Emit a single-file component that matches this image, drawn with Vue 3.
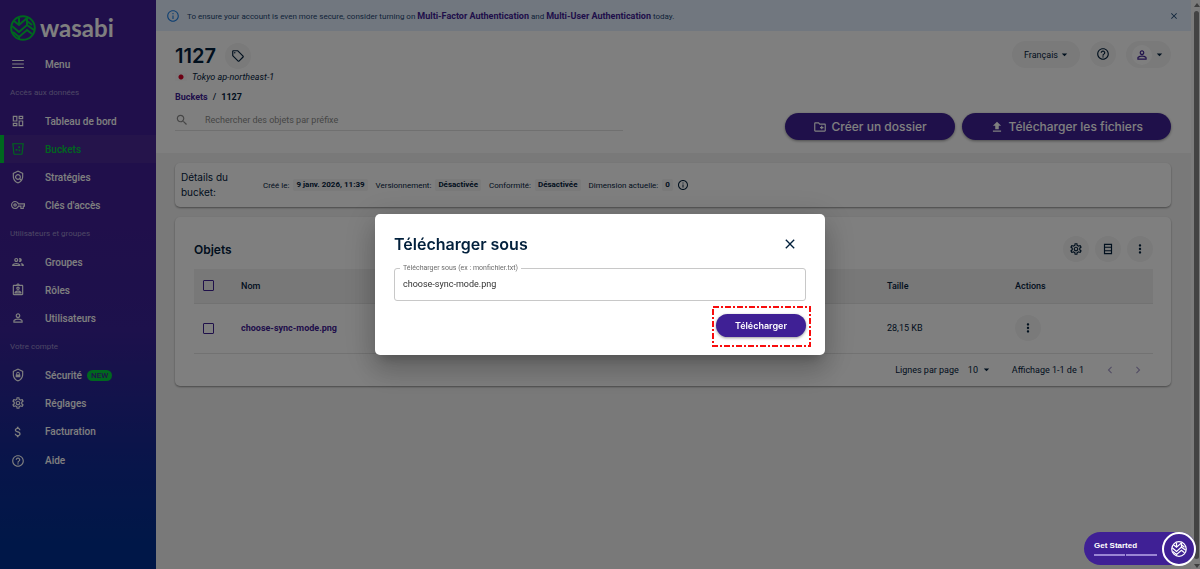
<template>
  <div class="layout">
    <aside class="sidebar">
      <a href="#" class="brand">
        <svg class="brand__mark" viewBox="0 0 26 26" aria-hidden="true">
          <circle cx="13" cy="13" r="11.800" />
          <path :d="leaf" />
        </svg>
        <span class="brand__name">wasabi</span>
      </a>
      <button class="item"><Icon name="menu" />Menu</button>
      <nav v-for="group in menu" :key="group.title">
        <h2 class="sidebar__title">{{ group.title }}</h2>
        <a
          v-for="item in group.items"
          :key="item.label"
          href="#"
          class="item"
          :class="{ 'item--active': item.active, 'item--tall': item.tall }"
        >
          <Icon :name="item.icon" />{{ item.label }}
          <span v-if="item.isNew" class="item__new">NEW</span>
        </a>
      </nav>
    </aside>

    <main class="main">
      <div class="banner">
        <Icon name="info" class="banner__icon" />
        <p class="banner__text">
          To ensure your account is even more secure, consider turning on
          <a href="#">Multi-Factor Authentication</a> and <a href="#">Multi-User Authentication</a> today.
        </p>
        <button class="banner__close" aria-label="Fermer"><Icon name="close" /></button>
      </div>

      <header class="header">
        <div class="header__row">
          <div>
            <div class="header__title">
              <h1>1127</h1>
              <button class="round" aria-label="Tags"><Icon name="tag" /></button>
            </div>
            <p class="region"><span class="region__flag"></span>Tokyo ap-northeast-1</p>
            <p class="crumbs"><a href="#">Buckets</a><span>/</span><b>1127</b></p>
          </div>
          <div class="header__tools">
            <button class="pill">Français<Icon name="arrow" class="arrow" /></button>
            <button class="round" aria-label="Aide"><Icon name="help" /></button>
            <button class="pill pill--user" aria-label="Compte">
              <span class="avatar"><Icon name="person" /></span><Icon name="arrow" class="arrow" />
            </button>
          </div>
        </div>
        <div class="header__row header__row--actions">
          <label class="search">
            <Icon name="search" />
            <input type="text" placeholder="Rechercher des objets par préfixe" aria-label="Rechercher" />
          </label>
          <div class="header__buttons">
            <button class="btn btn--large"><Icon name="folder" />Créer un dossier</button>
            <button class="btn btn--large"><Icon name="upload" />Télécharger les fichiers</button>
          </div>
        </div>
      </header>

      <section class="card details">
        <h2 class="details__title">Détails du bucket:</h2>
        <p v-for="d in details" :key="d.label" class="details__item">
          {{ d.label }} <b>{{ d.value }}</b>
          <Icon v-if="d.info" name="info" />
        </p>
      </section>

      <section class="card objects">
        <div class="objects__head">
          <h2>Objets</h2>
          <div class="objects__tools">
            <button class="round" aria-label="Réglages"><Icon name="settings" /></button>
            <button class="round" aria-label="Densité"><Icon name="rows" /></button>
            <button class="round" aria-label="Plus"><Icon name="more" /></button>
          </div>
        </div>
        <table>
          <thead>
            <tr>
              <th class="col-check"><input type="checkbox" aria-label="Tout sélectionner" /></th>
              <th>Nom</th>
              <th class="col-size">Taille</th>
              <th class="col-actions">Actions</th>
            </tr>
          </thead>
          <tbody>
            <tr v-for="o in objects" :key="o.name">
              <td><input type="checkbox" :aria-label="o.name" /></td>
              <td><a href="#">{{ o.name }}</a></td>
              <td>{{ o.size }}</td>
              <td><button class="round" aria-label="Actions"><Icon name="more" /></button></td>
            </tr>
          </tbody>
        </table>
        <div class="pager">
          <label for="rows">Lignes par page</label>
          <span class="pager__select">
            <select id="rows" v-model="perPage">
              <option>10</option>
              <option>25</option>
              <option>50</option>
            </select>
            <Icon name="arrow" class="arrow" />
          </span>
          <span class="pager__range">Affichage 1-1 de 1</span>
          <button disabled aria-label="Page précédente"><Icon name="left" /></button>
          <button disabled aria-label="Page suivante"><Icon name="right" /></button>
        </div>
      </section>
    </main>

    <div class="scroll" aria-hidden="true">
      <i class="scroll__up"></i>
      <i class="scroll__thumb"></i>
      <i class="scroll__down"></i>
    </div>

    <div v-if="open" class="overlay" @click.self="open = false">
      <form class="modal" role="dialog" aria-labelledby="modal-title" @submit.prevent="open = false">
        <div class="modal__head">
          <h2 id="modal-title">Télécharger sous</h2>
          <button type="button" class="modal__close" aria-label="Fermer" @click="open = false">
            <Icon name="close" />
          </button>
        </div>
        <fieldset class="field">
          <legend><label for="filename">Télécharger sous (ex : monfichier.txt)</label></legend>
          <input id="filename" v-model="filename" type="text" />
        </fieldset>
        <div class="modal__actions">
          <button class="btn">Télécharger</button>
          <svg class="highlight" aria-hidden="true">
            <rect x="1" y="1" width="97" height="39" />
          </svg>
        </div>
      </form>
    </div>

    <button class="started">
      <span class="started__body">
        Get Started
        <span class="started__steps"><i></i><i></i></span>
      </span>
      <span class="started__logo">
        <svg viewBox="0 0 26 26" aria-hidden="true">
          <circle cx="13" cy="13" r="11.800" />
          <path :d="leaf" />
        </svg>
      </span>
    </button>
  </div>
</template>

<script setup>
import { h, ref } from 'vue'

const paths = {
  menu: 'M2 19h20v-2H2v2zm0-6h20v-2H2v2zm0-8v2h20V5H2z',
  dashboard:
    'M19 5v2h-4V5h4M9 5v6H5V5h4m10 8v6h-4v-6h4M9 17v2H5v-2h4M21 3h-8v6h8V3zM11 3H3v10h8V3zm10 8h-8v10h8V11zm-10 4H3v6h8v-6z',
  bucket:
    'M2 2h20l-2 18c-.1 1.200-1 2-2 2H6c-1 0-1.900-.8-2-2L2 2zm2.300 2L6 20h12l1.700-16H4.300zM12 8l3-1 1 3-3 1zM8 12h3v3H8zM13 13h3v3h-3z',
  policy:
    'M12 1L3 5v6c0 5.550 3.840 10.740 9 12 5.160-1.260 9-6.450 9-12V5l-9-4zm0 2.180l7 3.120V11c0 1.850-.51 3.650-1.380 5.210l-1.450-1.450c1.290-1.940 1.070-4.580-.64-6.290a5 5 0 0 0-7.070 0 5 5 0 0 0 0 7.070c1.710 1.710 4.350 1.920 6.290.64l1.720 1.720c-1.190 1.420-2.730 2.510-4.470 3.040-4.020-1.250-7-5.420-7-9.940V6.300l7-3.120zM12 15c-1.660 0-3-1.340-3-3s1.340-3 3-3 3 1.340 3 3-1.340 3-3 3z',
  key: 'M22 19h-6v-4h-2.680c-1.140 2.420-3.600 4-6.320 4-3.860 0-7-3.140-7-7s3.140-7 7-7c2.720 0 5.170 1.580 6.320 4H24v6h-2v4zm-4-2h2v-4h2v-2H11.940l-.23-.67C11.010 8.340 9.110 7 7 7c-2.760 0-5 2.240-5 5s2.240 5 5 5c2.110 0 4.010-1.340 4.710-3.330l.23-.67H18v4zM7 15c-1.650 0-3-1.350-3-3s1.350-3 3-3 3 1.350 3 3-1.350 3-3 3zm0-4c-.55 0-1 .45-1 1s.45 1 1 1 1-.45 1-1-.45-1-1-1z',
  group:
    'M9 13.750c-2.340 0-7 1.170-7 3.500V19h14v-1.750c0-2.330-4.660-3.500-7-3.500zM4.340 17c.84-.58 2.870-1.250 4.660-1.250s3.820.67 4.660 1.250H4.340zM9 12c1.930 0 3.500-1.570 3.500-3.500S10.930 5 9 5 5.500 6.570 5.500 8.500 7.070 12 9 12zm0-5c.83 0 1.500.67 1.500 1.500S9.830 10 9 10s-1.500-.67-1.500-1.500S8.170 7 9 7zm7.040 6.810c1.160.84 1.960 1.960 1.960 3.440V19h4v-1.750c0-2.020-3.500-3.170-5.960-3.440zM15 12c1.930 0 3.500-1.570 3.500-3.500S16.930 5 15 5c-.54 0-1.040.13-1.500.35.63.89 1 1.980 1 3.150s-.37 2.260-1 3.150c.46.22.96.35 1.500.35z',
  role: 'M19 3h-4.180C14.400 1.840 13.300 1 12 1s-2.400.84-2.820 2H5c-1.100 0-2 .9-2 2v14c0 1.100.9 2 2 2h14c1.100 0 2-.9 2-2V5c0-1.100-.9-2-2-2zm-7-.25c.41 0 .75.34.75.75s-.34.75-.75.75-.75-.34-.75-.75.34-.75.75-.75zM19 19H5V5h14v14zM12 6c-1.650 0-3 1.350-3 3s1.350 3 3 3 3-1.350 3-3-1.350-3-3-3zm0 4c-.55 0-1-.45-1-1s.45-1 1-1 1 .45 1 1-.45 1-1 1zm-6 6.470V18h12v-1.530c0-2.500-3.970-3.580-6-3.580s-6 1.070-6 3.580zM8.310 16c.69-.56 2.380-1.120 3.690-1.120s3.010.56 3.690 1.120H8.310z',
  person:
    'M12 6c1.100 0 2 .9 2 2s-.9 2-2 2-2-.9-2-2 .9-2 2-2m0 9c2.700 0 5.800 1.290 6 2v1H6v-.99c.2-.72 3.300-2.010 6-2.010m0-11C9.790 4 8 5.790 8 8s1.790 4 4 4 4-1.790 4-4-1.790-4-4-4zm0 9c-2.670 0-8 1.340-8 4v3h16v-3c0-2.660-5.330-4-8-4z',
  shield:
    'M12 1L3 5v6c0 5.550 3.840 10.740 9 12 5.160-1.260 9-6.450 9-12V5l-9-4zm7 10c0 4.520-2.980 8.690-7 9.930-4.020-1.240-7-5.410-7-9.930V6.300l7-3.110 7 3.110V11zM8 16v-5h1V9.500a3 3 0 0 1 6 0V11h1v5H8zm2.500-5h3V9.500a1.500 1.500 0 0 0-3 0V11z',
  settings:
    'M19.430 12.980c.04-.32.07-.64.07-.98s-.03-.66-.07-.98l2.110-1.650c.19-.15.24-.42.12-.64l-2-3.460c-.09-.16-.26-.25-.44-.25-.06 0-.12.01-.17.03l-2.490 1c-.52-.4-1.080-.73-1.690-.98l-.38-2.650C14.460 2.180 14.250 2 14 2h-4c-.25 0-.46.18-.49.42l-.38 2.650c-.61.25-1.170.59-1.690.98l-2.490-1c-.06-.02-.12-.03-.18-.03-.17 0-.34.09-.43.25l-2 3.460c-.13.22-.07.49.12.64l2.110 1.650c-.04.32-.07.65-.07.98s.03.66.07.98l-2.110 1.650c-.19.15-.24.42-.12.64l2 3.460c.09.16.26.25.44.25.06 0 .12-.01.17-.03l2.490-1c.52.4 1.080.73 1.690.98l.38 2.650c.03.24.24.42.49.42h4c.25 0 .46-.18.49-.42l.38-2.650c.61-.25 1.170-.59 1.690-.98l2.490 1c.06.02.12.03.18.03.17 0 .34-.09.43-.25l2-3.460c.12-.22.07-.49-.12-.64l-2.110-1.650zm-1.980-1.710c.04.31.05.52.05.73s-.02.43-.05.73l-.14 1.130.89.7 1.080.84-.7 1.210-1.270-.51-1.040-.42-.9.68c-.43.32-.84.56-1.250.73l-1.060.43-.16 1.130-.2 1.350h-1.400l-.19-1.350-.16-1.130-1.060-.43c-.43-.18-.83-.41-1.230-.71l-.91-.7-1.060.43-1.270.51-.7-1.210 1.080-.84.89-.7-.14-1.130c-.03-.31-.05-.54-.05-.74s.02-.43.05-.73l.14-1.130-.89-.7-1.080-.84.7-1.210 1.270.51 1.040.42.9-.68c.43-.32.84-.56 1.250-.73l1.060-.43.16-1.130.2-1.350h1.390l.19 1.350.16 1.130 1.060.43c.43.18.83.41 1.230.71l.91.7 1.060-.43 1.270-.51.7 1.210-1.070.85-.89.7.14 1.130zM12 8c-2.210 0-4 1.790-4 4s1.790 4 4 4 4-1.790 4-4-1.790-4-4-4zm0 6c-1.100 0-2-.9-2-2s.9-2 2-2 2 .9 2 2-.9 2-2 2z',
  dollar:
    'M11.800 10.900c-2.270-.59-3-1.200-3-2.150 0-1.090 1.010-1.850 2.700-1.850 1.780 0 2.440.85 2.500 2.100h2.210c-.07-1.720-1.120-3.300-3.210-3.810V3h-3v2.160c-1.940.42-3.500 1.680-3.500 3.610 0 2.310 1.910 3.460 4.700 4.130 2.500.6 3 1.480 3 2.410 0 .69-.49 1.790-2.700 1.790-2.060 0-2.870-.92-2.980-2.100h-2.200c.12 2.190 1.760 3.420 3.680 3.830V21h3v-2.150c1.950-.37 3.500-1.500 3.500-3.550 0-2.840-2.430-3.810-4.700-4.400z',
  help: 'M11 18h2v-2h-2v2zm1-16C6.480 2 2 6.480 2 12s4.480 10 10 10 10-4.480 10-10S17.520 2 12 2zm0 18c-4.410 0-8-3.590-8-8s3.590-8 8-8 8 3.590 8 8-3.590 8-8 8zm0-14c-2.210 0-4 1.790-4 4h2c0-1.100.9-2 2-2s2 .9 2 2c0 2-3 1.750-3 5h2c0-2.250 3-2.500 3-5 0-2.210-1.790-4-4-4z',
  info: 'M11 7h2v2h-2V7zm0 4h2v6h-2v-6zm1-9C6.480 2 2 6.480 2 12s4.480 10 10 10 10-4.480 10-10S17.520 2 12 2zm0 18c-4.410 0-8-3.590-8-8s3.590-8 8-8 8 3.590 8 8-3.590 8-8 8z',
  close:
    'M19 6.410L17.590 5 12 10.590 6.410 5 5 6.410 10.590 12 5 17.590 6.410 19 12 13.410 17.590 19 19 17.590 13.410 12z',
  tag: 'M21.410 11.580l-9-9C12.050 2.220 11.550 2 11 2H4c-1.100 0-2 .9-2 2v7c0 .55.22 1.050.59 1.420l9 9c.36.36.86.58 1.410.58s1.050-.22 1.410-.59l7-7c.37-.36.59-.86.59-1.410s-.23-1.060-.59-1.420zM13 20.010L4 11V4h7v-.01l9 9-7 7.020zM6.500 5.300a1.200 1.200 0 1 0 0 2.400 1.200 1.200 0 0 0 0-2.400z',
  arrow: 'M7 10l5 5 5-5z',
  search:
    'M15.500 14h-.79l-.28-.27C15.410 12.590 16 11.110 16 9.500 16 5.910 13.090 3 9.500 3S3 5.910 3 9.500 5.910 16 9.500 16c1.610 0 3.090-.59 4.230-1.570l.27.28v.79l5 4.990L20.490 19l-4.990-5zm-6 0C7.010 14 5 11.990 5 9.500S7.010 5 9.500 5 14 7.010 14 9.500 11.990 14 9.500 14z',
  folder:
    'M20 6h-8l-2-2H4c-1.110 0-1.990.89-1.990 2L2 18c0 1.110.89 2 2 2h16c1.110 0 2-.89 2-2V8c0-1.110-.89-2-2-2zm0 12H4V6h5.170l2 2H20v10zm-8-4h2v2h2v-2h2v-2h-2v-2h-2v2h-2z',
  upload: 'M5 20h14v-2H5v2zm0-10h4v6h6v-6h4l-7-7-7 7z',
  rows: 'M5 3v18h14V3H5zm12 2v3H7V5h10zm0 5v4H7v-4h10zM7 19v-3h10v3H7z',
  more: 'M12 8c1.100 0 2-.9 2-2s-.9-2-2-2-2 .9-2 2 .9 2 2 2zm0 2c-1.100 0-2 .9-2 2s.9 2 2 2 2-.9 2-2-.9-2-2-2zm0 6c-1.100 0-2 .9-2 2s.9 2 2 2 2-.9 2-2-.9-2-2-2z',
  left: 'M15.410 7.410L14 6l-6 6 6 6 1.410-1.410L10.830 12z',
  right: 'M10 6L8.590 7.410 13.170 12l-4.580 4.590L10 18l6-6z',
}

const Icon = (props) =>
  h('svg', { class: 'icon', viewBox: '0 0 24 24', 'aria-hidden': true }, [h('path', { d: paths[props.name] })])
Icon.props = ['name']

// woven strokes inside the round mark
const leaf = 'M4 6l5 4 8-7M2 11l7 6 8-7 7 5M3 17l6 5 8-7 5 4M9 10V3M17 10V3M17 6l5 4M9 22v2'

const menu = [
  {
    title: 'Accès aux données',
    items: [
      { label: 'Tableau de bord', icon: 'dashboard' },
      { label: 'Buckets', icon: 'bucket', active: true },
      { label: 'Stratégies', icon: 'policy' },
      { label: "Clés d'accès", icon: 'key' },
    ],
  },
  {
    title: 'Utilisateurs et groupes',
    items: [
      { label: 'Groupes', icon: 'group' },
      { label: 'Rôles', icon: 'role' },
      { label: 'Utilisateurs', icon: 'person' },
    ],
  },
  {
    title: 'Votre compte',
    items: [
      { label: 'Sécurité', icon: 'shield', isNew: true },
      { label: 'Réglages', icon: 'settings' },
      { label: 'Facturation', icon: 'dollar', tall: true },
      { label: 'Aide', icon: 'help', tall: true },
    ],
  },
]

const details = [
  { label: 'Créé le:', value: '9 janv. 2026, 11:39' },
  { label: 'Versionnement:', value: 'Désactivée' },
  { label: 'Conformité:', value: 'Désactivée' },
  { label: 'Dimension actuelle:', value: '0', info: true },
]

const objects = [{ name: 'choose-sync-mode.png', size: '28,15 KB' }]

const open = ref(true)
const filename = ref('choose-sync-mode.png')
const perPage = ref('10')
</script>

<style>
body {
  background: #f3f3f3;
}
</style>

<style scoped>
* {
  box-sizing: border-box;
}
.layout {
  display: flex;
  min-height: 100vh;
  font-family: Roboto, 'Liberation Sans', sans-serif;
  font-size: 9px;
  color: #02203c;
}
h1,
h2,
p {
  margin: 0;
}
button,
input,
select {
  font: inherit;
  color: inherit;
}
button {
  border: none;
  background: none;
  padding: 0;
  display: inline-flex;
  align-items: center;
  justify-content: center;
  cursor: pointer;
}
a {
  text-decoration: none;
  color: #3f2095;
}
.icon {
  width: 14px;
  height: 14px;
  fill: currentColor;
  flex: none;
}

/* sidebar */
.sidebar {
  width: 156px;
  flex: none;
  background: linear-gradient(#401f96 0%, #401f96 40%, #3a2298 58%, #102a94 82%, #002f90 96%);
  color: #fff;
}
.brand {
  display: flex;
  align-items: center;
  gap: 4px;
  height: 50px;
  padding: 5px 10px 0;
}
.brand__mark {
  width: 26px;
  height: 26px;
  fill: none;
  stroke: #00ce3e;
  stroke-width: 2;
}
.brand__name {
  font: 700 24px/28px Lato, sans-serif;
  color: #fff;
}
.item {
  display: flex;
  align-items: center;
  justify-content: flex-start;
  gap: 20px;
  width: 100%;
  height: 28px;
  padding-left: 11px;
  font-size: 10px;
  font-weight: 500;
  color: #fff;
}
.item--active {
  color: #00ce3e;
  background: #4a2896;
  border-left: 4px solid #00ce3e;
  padding-left: 7px;
}
.item--tall {
  height: 29px;
}
.item__new {
  margin-left: -15px;
  padding: 0 4px;
  border-radius: 6px;
  background: #00ce3e;
  color: #401f96;
  font-size: 8px;
  line-height: 11px;
}
.sidebar__title {
  height: 29px;
  padding-left: 10px;
  font-size: 8px;
  font-weight: 400;
  line-height: 29px;
  color: #9c8fca;
}

/* page */
.main {
  flex: 1;
  min-width: 0;
}
.banner {
  display: flex;
  align-items: center;
  height: 31px;
  padding: 0 12px 0 10px;
  background: #e3effe;
  color: #1c4674;
}
.banner__icon {
  color: #2080e4;
}
.banner__text {
  flex: 1;
  margin-left: 7px;
  font-size: 8px;
}
.banner__text a {
  font-size: 9px;
  font-weight: 700;
}
.banner__close .icon {
  width: 10px;
  height: 10px;
}
.header {
  padding: 10px 20px 13px 19px;
  background: #fff;
}
.header__row {
  display: flex;
  justify-content: space-between;
  align-items: flex-start;
}
.header__row--actions {
  height: 31px;
  margin-top: 5px;
}
.header__title {
  display: flex;
  align-items: center;
  gap: 9px;
  height: 30px;
}
h1 {
  font: 600 20px/28px Inter, sans-serif;
}
.round {
  width: 26px;
  height: 26px;
  border-radius: 50%;
  background: #f4f4f4;
}
.region {
  display: flex;
  align-items: center;
  gap: 5px;
  line-height: 12px;
  font-style: italic;
}
.region__flag {
  width: 12px;
  height: 8px;
  background: radial-gradient(circle, #d80027 2px, #fafafa 3px);
}
.crumbs {
  display: flex;
  gap: 5px;
  margin-top: 7px;
  font-weight: 500;
  line-height: 14px;
}
.crumbs a,
.crumbs b {
  font-weight: 700;
}
.header__tools {
  display: flex;
  gap: 10px;
}
.pill {
  height: 27px;
  padding: 0 9px 0 12px;
  border-radius: 14px;
  background: #f4f4f4;
}
.arrow {
  width: 13px;
  height: 13px;
}
.pill--user {
  padding: 0 5px 0 6px;
  gap: 1px;
}
.avatar {
  display: flex;
  align-items: center;
  justify-content: center;
  width: 20px;
  height: 20px;
  border-radius: 50%;
  background: #fff;
  color: #3f2095;
}
.search {
  display: flex;
  align-items: center;
  gap: 16px;
  width: 45%;
  height: 22px;
  border-bottom: 1px solid #e0e0e0;
  color: #8c8c8c;
}
.search input {
  flex: 1;
  border: none;
  outline: none;
  background: none;
  padding: 0;
}
.search input::placeholder {
  color: #8c8c8c;
}
.header__buttons {
  display: flex;
  align-self: flex-end;
  gap: 7px;
}
.btn {
  height: 23px;
  padding: 0 19px;
  border-radius: 14px;
  background: #3f2095;
  color: #fff;
  font: 600 9px Inter, sans-serif;
  box-shadow: 0 1px 3px rgba(0, 0, 0, 0.4);
}
.btn--large {
  height: 27px;
  padding: 0 28px;
  gap: 5px;
  font-size: 12px;
  font-weight: 500;
}
.card {
  margin: 10px 20px 0 19px;
  border-radius: 5px;
  background: #fff;
  box-shadow: 0 1px 2px rgba(0, 0, 0, 0.4);
}
.details {
  display: flex;
  align-items: center;
  gap: 8px;
  height: 44px;
  padding: 0 6px;
  font-size: 8px;
}
.details__title {
  width: 74px;
  padding-right: 20px;
  font: 400 10px/15px Inter, sans-serif;
}
.details__item {
  display: flex;
  align-items: center;
  gap: 4px;
}
.details__item b {
  padding: 0 3px;
  border-radius: 2px;
  background: #f4f4f4;
  line-height: 12px;
}
.details__item .icon {
  width: 12px;
  height: 12px;
}
.objects {
  padding: 19px 18px 0 19px;
}
.objects__head {
  display: flex;
  align-items: center;
  justify-content: space-between;
  height: 26px;
  margin-bottom: 7px;
}
.objects__head h2 {
  font: 600 12px Inter, sans-serif;
}
.objects__tools {
  display: flex;
  gap: 6px;
}
table {
  width: 100%;
  table-layout: fixed;
  border-collapse: collapse;
}
th,
td {
  padding: 0;
  text-align: left;
  border-bottom: 1px solid #e4e4e4;
}
th {
  height: 34px;
  background: #f0f0f0;
  font-weight: 500;
}
td {
  height: 50px;
}
td a {
  font-weight: 700;
}
.col-check {
  width: 47px;
}
.col-size {
  width: 128px;
}
.col-actions {
  width: 138px;
}
input[type='checkbox'] {
  appearance: none;
  display: block;
  width: 11px;
  height: 11px;
  margin: 0 0 0 9px;
  border: 1px solid #3f2095;
  border-radius: 1px;
}
.pager {
  display: flex;
  align-items: center;
  justify-content: flex-end;
  height: 32px;
  padding-right: 8px;
}
.pager__select {
  display: flex;
  align-items: center;
  margin: 0 19px 0 9px;
}
.pager select {
  appearance: none;
  width: 12px;
  padding: 0;
  border: none;
  background: none;
}
.pager__range {
  margin-right: 19px;
}
.pager button {
  margin-left: 14px;
  color: #a89ecb;
}
.pager__range + button {
  margin-left: 0;
}

/* scroll track */
.scroll {
  display: flex;
  flex-direction: column;
  align-items: center;
  width: 9px;
  padding: 3px 1px 1px 3px;
  background: #f8f8f8;
}
.scroll__up,
.scroll__down {
  border: 3px solid transparent;
}
.scroll__up {
  border-top: 0;
  border-bottom: 4px solid #7c7c7c;
}
.scroll__down {
  border-bottom: 0;
  border-top: 4px solid #7c7c7c;
}
.scroll__thumb {
  flex: 1;
  width: 5px;
  margin: 4px 0 5px;
  border-radius: 3px;
  background: #868686;
}

/* modal */
.overlay {
  position: fixed;
  inset: 0;
  z-index: 10;
  display: flex;
  align-items: center;
  justify-content: center;
  background: rgba(0, 0, 0, 0.5);
}
.modal {
  width: 450px;
  max-width: 90%;
  padding: 18px 19px;
  border-radius: 5px;
  background: #fff;
  box-shadow: 0 8px 11px -5px rgba(0, 0, 0, 0.2), 0 17px 27px 2px rgba(0, 0, 0, 0.14),
    0 6px 32px 6px rgba(0, 0, 0, 0.12);
}
.modal__head {
  display: flex;
  align-items: center;
  justify-content: space-between;
  height: 24px;
  padding-right: 8px;
}
.modal__head h2 {
  font: 600 16px/24px Inter, sans-serif;
}
.modal__close .icon {
  width: 16px;
  height: 16px;
}
.field {
  height: 37px;
  margin: 8px 0 13px;
  padding: 0 5px;
  border: 1px solid #c8c8c8;
  border-radius: 3px;
}
.field legend {
  padding: 0 3px;
  font-size: 7px;
  line-height: 8px;
  color: #6c6c6c;
}
.field input {
  display: block;
  width: 100%;
  height: 24px;
  padding: 0 3px;
  border: none;
  outline: none;
  background: none;
  color: #333;
}
.modal__actions {
  position: relative;
  display: flex;
  justify-content: flex-end;
}
.highlight {
  position: absolute;
  top: -8px;
  right: -5px;
  width: 99px;
  height: 41px;
  pointer-events: none;
}
.highlight rect {
  fill: none;
  stroke: #f80d0d;
  stroke-width: 2;
  stroke-dasharray: 6 2 2 2;
}

/* get started */
.started {
  position: fixed;
  right: 4px;
  bottom: 4px;
  z-index: 20;
  height: 33px;
  padding-left: 10px;
  border-radius: 17px;
  background: #3f2095;
  color: #fff;
}
.started__body {
  width: 63px;
  margin-right: 5px;
  text-align: left;
  font: 700 8px 'Liberation Sans', sans-serif;
}
.started__steps {
  display: flex;
  gap: 1px;
  margin-top: 4px;
}
.started__steps i {
  flex: 1;
  height: 2px;
  background: #9a86d4;
}
.started__logo {
  display: flex;
  align-items: center;
  justify-content: center;
  width: 34px;
  height: 34px;
  border: 2px solid #fff;
  border-radius: 50%;
  background: #3f2095;
}
.started__logo svg {
  width: 16px;
  height: 16px;
  fill: none;
  stroke: #fff;
  stroke-width: 2;
}
</style>
